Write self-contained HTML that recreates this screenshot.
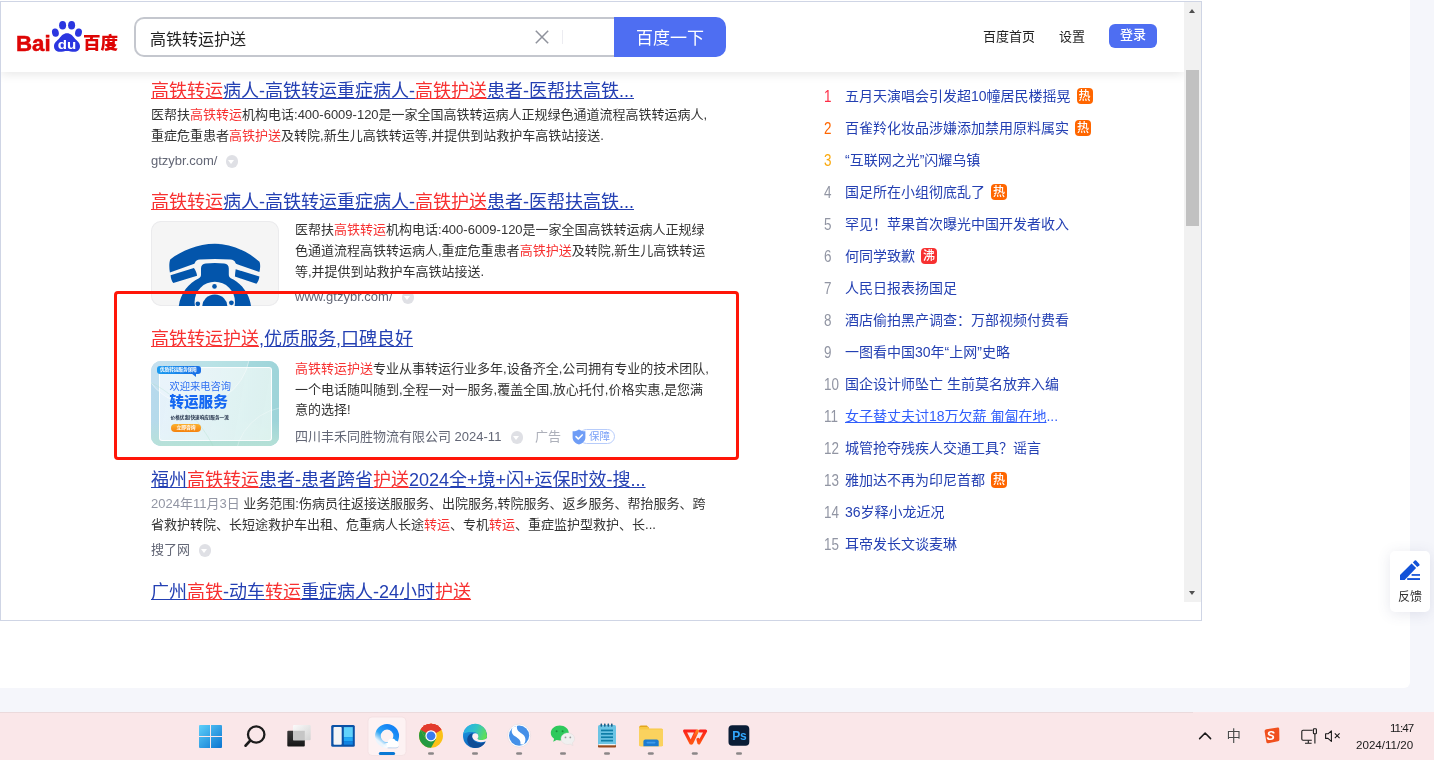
<!DOCTYPE html>
<html lang="zh-CN">
<head>
<meta charset="utf-8">
<title>高铁转运护送_百度搜索</title>
<style>
*{box-sizing:border-box;margin:0;padding:0}
html,body{width:1434px;height:760px;overflow:hidden}
body{position:relative;background:#f5f6fb;font-family:"Liberation Sans","Noto Sans CJK SC",sans-serif;color:#333;font-size:13px}
a{text-decoration:none;color:inherit}
.abs{position:absolute}
#panel{position:absolute;left:0;top:0;width:1410px;height:688px;background:#fff;border-radius:0 0 6px 0}
#frame{position:absolute;left:0;top:1px;width:1202px;height:620px;border:1px solid #cfd5e5;background:#fff;overflow:hidden}
/* everything inside frame is positioned in page coords via offset wrapper */
#in{position:absolute;left:-1px;top:-2px;width:1434px;height:760px;will-change:transform}
#head{position:absolute;left:1px;top:2px;width:1183px;height:70px;background:#fff;box-shadow:0 2px 10px rgba(0,0,0,.10)}
#sbox{position:absolute;left:134px;top:17px;width:482px;height:40px;border:2px solid #c4c7ce;border-right:none;border-radius:10px 0 0 10px;background:#fff}
#sbtn{position:absolute;left:614px;top:17px;width:112px;height:40px;background:#4e6ef2;border-radius:0 10px 10px 0;color:#fff;font-size:17px;line-height:43px;text-align:center}
#q{position:absolute;left:150px;top:19px;line-height:42px;font-size:16px;color:#222}
.nav{position:absolute;top:28px;font-size:13px;color:#222;line-height:18px}
#login{position:absolute;left:1109px;top:24px;width:48px;height:24px;background:#4e6ef2;border-radius:6px;color:#fff;font-size:13px;line-height:22px;text-align:center;font-weight:500}
.t{margin-top:1px;position:absolute;left:151px;font-size:18px;line-height:24px;color:#2440b3;text-decoration:underline;white-space:nowrap}
.t em,.d em{font-style:normal;color:#f73131}
.t em{text-decoration:underline;text-decoration-color:#f73131}
.d{position:absolute;font-size:13px;line-height:21px;color:#333;white-space:nowrap}
.u{margin-top:1px;position:absolute;font-size:13px;line-height:18px;color:#626675;white-space:nowrap}
.g{color:#9195a3}
.ad{color:#adb0ba}
.ic{position:absolute;width:12.600px;height:12.600px;border-radius:50%;background:#dfe0e5;margin-left:.5px}
.ic:after{content:"";position:absolute;left:2.900px;top:4.600px;border:3.400px solid transparent;border-top:4.400px solid #fff;border-bottom:none}
.hot{position:absolute;left:822px;font-size:14px;line-height:20px;white-space:nowrap;color:#2440b3}
.hot i{font-style:normal;display:inline-block;width:21.500px;margin-left:1.500px;color:#9195a3;font-size:16px;vertical-align:-.5px;transform:scaleX(.84);transform-origin:0 50%}
.tag{display:inline-block;width:16px;height:16px;border-radius:4px;background:#f60;color:#fff;font-size:12px;line-height:16px;text-align:center;margin-left:6px;vertical-align:1px;font-weight:500}
#redbox{position:absolute;left:113.600px;top:291.400px;width:625px;height:169px;border:3px solid #ff1608;border-radius:4px}
#task{position:absolute;left:0;top:712px;width:1434px;height:48px;background:#fae7e9}

.hov .tx{color:#315efb;text-decoration:underline}
.tag.fei{background:#f73131}
#sb{position:absolute;left:1184px;top:2px;width:17px;height:600px;background:#f1f1f1}
#sb .th{position:absolute;left:2px;top:68px;width:13px;height:156px;background:#c1c1c1}
#sb .up{position:absolute;left:5px;top:7px;border:3.800px solid transparent;border-bottom:4.300px solid #505050;border-top:none;width:0;height:0}
#sb .dn{position:absolute;left:5px;top:589px;border:3.800px solid transparent;border-top:4.300px solid #505050;border-bottom:none;width:0;height:0}
#logo{position:absolute;left:10px;top:14px}
#fb{position:absolute;left:1390px;top:550.800px;width:40px;height:61.300px;background:#fff;border-radius:5px;box-shadow:0 2px 14px rgba(70,80,120,.13)}
#fb span{position:absolute;left:0;width:40px;top:37.800px;text-align:center;font-size:12px;line-height:16px;color:#333}
.tk{position:absolute;top:712px}
#fb,#tsvg{will-change:transform}
#clock,#clock2{will-change:transform;position:absolute;font-size:11.600px;line-height:14px;color:#1b1b1b;white-space:nowrap}#clock{right:20.500px;top:721px;letter-spacing:-1px}#clock2{right:20.500px;top:737.500px}
</style>
</head>
<body>
<div id="panel"></div>
<div id="frame"><div id="in">
  <!-- results -->
  <div class="t" style="top:78px"><em>高铁转运</em>病人-高铁转运重症病人-<em>高铁护送</em>患者-医帮扶高铁...</div>
  <div class="d" style="left:151px;top:104px">医帮扶<em>高铁转运</em>机构电话:400-6009-120是一家全国高铁转运病人正规绿色通道流程高铁转运病人,<br>重症危重患者<em>高铁护送</em>及转院,新生儿高铁转运等,并提供到站救护车高铁站接送.</div>
  <div class="u" style="left:151px;top:151px">gtzybr.com/</div>
  <div class="ic" style="left:225px;top:155px"></div>

  <div class="t" style="top:189px"><em>高铁转运</em>病人-高铁转运重症病人-<em>高铁护送</em>患者-医帮扶高铁...</div>
  <div class="abs" id="img1" style="left:151px;top:221px;width:128px;height:85px;border-radius:10px;background:#f5f5f5;box-shadow:inset 0 0 0 1px #ebebed;overflow:hidden"><svg width="128" height="85" viewBox="0 0 128 85"><g fill="#0355ab">
<path d="M19.200 38.500C30 30 47 22.800 63.800 22.800S97 30.500 108.500 40.800c1.200 3 .6 7.600-.1 10.200L85.600 43c-.6-.2-1-.7-1.200-1.300-.8-2-2.400-2.900-5-3.100-10.200-.9-20.800-.9-30.400 0-2.800.3-4.400 1.300-5.200 3.300-.2.600-.6 1-1.200 1.200L18.900 51.400c-.8-4-.9-9.600.3-12.900z"/>
<path d="M19.600 54.200l23.300-7.300c1.700 2.200 2.900 5 3.200 7.900L22.300 61.900c-1.600-1.800-2.500-4.800-2.700-7.700z"/>
<path d="M84.700 48.200l23.700 7.300c-.3 2.900-1.300 5.600-3 7.300L83.900 55.500c.2-2.600.4-5 .8-7.300z"/>
<path d="M27.800 85C29.500 72 37.800 62 48 57.200c1.400-.7 2-2 2-3.600v-6c0-3 1.600-4.600 4.600-5 6-.7 12.400-.7 18.600 0 3 .4 4.600 2 4.600 5v6c0 1.600.7 2.900 2 3.600C90 62 98.300 72 100 85z"/>
</g>
<circle cx="63.800" cy="81" r="20.200" fill="#f5f5f5"/>
<g fill="#0355ab"><circle cx="63.800" cy="86" r="12.600"/><circle cx="63.500" cy="65.400" r="2.300"/><circle cx="46.800" cy="82.800" r="2.300"/><circle cx="80.400" cy="81.800" r="2.400"/><circle cx="51.500" cy="71.500" r="0"/></g></svg></div>
  <div class="d" style="left:295px;top:219px">医帮扶<em>高铁转运</em>机构电话:400-6009-120是一家全国高铁转运病人正规绿<br>色通道流程高铁转运病人,重症危重患者<em>高铁护送</em>及转院,新生儿高铁转运<br>等,并提供到站救护车高铁站接送.</div>
  <div class="u" style="left:295px;top:287px">www.gtzybr.com/</div>
  <div class="ic" style="left:401px;top:291px"></div>

  <div class="t" style="top:326px"><em>高铁转运护送</em>,优质服务,口碑良好</div>
  <div class="abs" id="img2" style="left:151px;top:361px;width:128px;height:84.600px;border-radius:10px;background:#b5dde6;overflow:hidden"><div class="abs" style="left:0;top:0;width:128px;height:85px;background:linear-gradient(100deg,#b9d9ee 0%,#a9dce0 45%,#9dd3d8 100%)"></div>
<div class="abs" style="left:0;top:60px;width:128px;height:25px;background:linear-gradient(180deg,rgba(184,226,214,0),rgba(184,226,214,.9))"></div>
<div class="abs" style="left:8px;top:5.500px;width:113px;height:74px;border-radius:3px;border:1px solid rgba(255,255,255,.85);background:linear-gradient(100deg,rgba(234,244,252,.92),rgba(226,244,240,.9))"></div>
<svg class="abs" style="left:0;top:0" width="128" height="85" viewBox="0 0 128 85"><circle cx="44" cy="-11" r="55" fill="rgba(255,255,255,.18)" stroke="rgba(255,255,255,.75)" stroke-width=".6"/><circle cx="139" cy="101" r="55" fill="none" stroke="rgba(255,255,255,.6)" stroke-width=".5"/><path d="M0 22C20 30 50 60 62 85" fill="none" stroke="rgba(160,220,190,.5)" stroke-width=".5"/></svg><div class="abs" style="left:5.800px;top:4.800px;width:44px;height:8.400px;border-radius:3px 3px 3px 3px;background:linear-gradient(90deg,#1a9bf0,#1a6fe6)"></div>
<div class="abs" style="left:40px;top:12px;width:0;height:0;border-left:5px solid transparent;border-top:4px solid #1a72e7"></div>
<div class="abs" style="left:9px;top:4.800px;width:40px;height:8.400px;line-height:8.400px;font-size:4.700px;font-weight:bold;color:#fff;white-space:nowrap;letter-spacing:-.1px">优质转运服务保障</div>
<div class="abs" style="left:18.400px;top:17.500px;font-size:10.300px;line-height:15px;color:#2b6ff0;font-weight:400;text-shadow:0 0 1px #fff;white-space:nowrap">欢迎来电咨询</div>
<div class="abs" style="left:18.400px;top:31px;font-size:14.600px;line-height:21px;color:#1668f2;font-weight:900;white-space:nowrap">转运服务</div>
<div class="abs" style="left:19.500px;top:52.500px;font-size:4.600px;line-height:8px;color:#1c2a44;font-weight:bold;white-space:nowrap;letter-spacing:.05px">价格优惠|快速响应|服务一流</div>
<div class="abs" style="left:20px;top:63px;width:30px;height:8px;border-radius:4px;background:linear-gradient(180deg,#fbb02e,#f5820e);color:#fff;font-size:4.800px;line-height:8px;text-align:center;font-weight:bold">立即咨询</div></div>
  <div class="d" style="left:295px;top:359px;line-height:20.700px"><em>高铁转运护送</em>专业从事转运行业多年,设备齐全,公司拥有专业的技术团队,<br>一个电话随叫随到,全程一对一服务,覆盖全国,放心托付,价格实惠,是您满<br>意的选择!</div>
  <div class="u" style="left:295px;top:427px">四川丰禾同胜物流有限公司 2024-11</div>
  <div class="ic" style="left:510px;top:431px"></div>
  <div class="u ad" style="left:535px;top:427px">广告</div>
  <div class="abs" style="left:579px;top:429px;width:36px;height:15px;border:1px solid #b7ccfb;border-radius:8px;background:#fff"></div>
  <div class="abs" style="left:589px;top:429px;font-size:10.500px;line-height:15px;color:#7ba2f8;white-space:nowrap">保障</div>
  <svg class="abs" style="left:572px;top:428.500px" width="15" height="16" viewBox="0 0 15 16"><path d="M7 .4c2 1.300 4 1.800 6.400 1.800v6.300c0 3.400-2.700 5.800-6.400 7.100C3.300 14.300.6 11.900.6 8.500V2.200C3 2.200 5 1.700 7 .4z" fill="#6f9df6"/><path d="M4 7.600l2.300 2.300 3.900-4" fill="none" stroke="#fff" stroke-width="1.500" stroke-linecap="round" stroke-linejoin="round"/></svg>

  <div class="t" style="top:467px">福州<em>高铁转运</em>患者-患者跨省<em>护送</em>2024全+境+闪+运保时效-搜...</div>
  <div class="d" style="left:151px;top:493px"><span class="g">2024年11月3日 </span>业务范围:伤病员往返接送服服务、出院服务,转院服务、返乡服务、帮抬服务、跨<br>省救护转院、长短途救护车出租、危重病人长途<em>转运</em>、专机<em>转运</em>、重症监护型救护、长...</div>
  <div class="u" style="left:151px;top:540px">搜了网</div>
  <div class="ic" style="left:198px;top:544px"></div>

  <div class="t" style="top:578.500px">广州<em>高铁</em>-动车<em>转运</em>重症病人-24小时<em>护送</em></div>

  <!-- hot list -->
  <div class="hot" style="top:86px"><i style="color:#fe2d46">1</i><span class="tx">五月天演唱会引发超10幢居民楼摇晃</span><span class="tag">热</span></div>
  <div class="hot" style="top:118px"><i style="color:#f60">2</i><span class="tx">百雀羚化妆品涉嫌添加禁用原料属实</span><span class="tag">热</span></div>
  <div class="hot" style="top:150px"><i style="color:#faa90e">3</i><span class="tx">“互联网之光”闪耀乌镇</span></div>
  <div class="hot" style="top:182px"><i>4</i><span class="tx">国足所在小组彻底乱了</span><span class="tag">热</span></div>
  <div class="hot" style="top:214px"><i>5</i><span class="tx">罕见！苹果首次曝光中国开发者收入</span></div>
  <div class="hot" style="top:246px"><i>6</i><span class="tx">何同学致歉</span><span class="tag fei">沸</span></div>
  <div class="hot" style="top:278px"><i>7</i><span class="tx">人民日报表扬国足</span></div>
  <div class="hot" style="top:310px"><i>8</i><span class="tx">酒店偷拍黑产调查：万部视频付费看</span></div>
  <div class="hot" style="top:342px"><i>9</i><span class="tx">一图看中国30年“上网”史略</span></div>
  <div class="hot" style="top:374px"><i>10</i><span class="tx">国企设计师坠亡 生前莫名放弃入编</span></div>
  <div class="hot hov" style="top:406px"><i>11</i><span class="tx">女子替丈夫讨18万欠薪 匍匐在地</span><span style="color:#315efb">...</span></div>
  <div class="hot" style="top:438px"><i>12</i><span class="tx">城管抢夺残疾人交通工具？谣言</span></div>
  <div class="hot" style="top:470px"><i>13</i><span class="tx">雅加达不再为印尼首都</span><span class="tag">热</span></div>
  <div class="hot" style="top:502px"><i>14</i><span class="tx">36岁释小龙近况</span></div>
  <div class="hot" style="top:534px"><i>15</i><span class="tx">耳帝发长文谈麦琳</span></div>

  <div id="head">
  </div>
<svg id="logo" width="120" height="46" viewBox="10 14 120 46">
    <text x="16" y="51" font-family="Liberation Sans,sans-serif" font-weight="bold" font-size="22.500" fill="#de0505" stroke="#de0505" stroke-width=".5" textLength="34.600" lengthAdjust="spacingAndGlyphs">Bai</text>
    <g fill="#2b36e0">
      <ellipse cx="62.6" cy="25.3" rx="3.5" ry="4.3"/>
      <ellipse cx="71.6" cy="25.3" rx="3.5" ry="4.3"/>
      <ellipse cx="55.4" cy="32.6" rx="3.4" ry="4.2" transform="rotate(-12 55.4 32.6)"/>
      <ellipse cx="78.5" cy="32.6" rx="3.4" ry="4.2" transform="rotate(12 78.5 32.6)"/>
      <path d="M67 33.2c-3.6 0-5.6 2.6-7.6 5-2.2 2.4-5.4 4.4-5.4 8 0 3.600 2.700 5.600 5.800 5.600 2.600 0 4.800-.8 7.200-.8s4.600.8 7.200.8c3.100 0 5.800-2 5.800-5.600 0-3.600-3.200-5.600-5.400-8-2-2.400-4-5-7.600-5z"/>
    </g>
    <text x="57.800" y="48.800" font-family="Liberation Sans,sans-serif" font-weight="bold" font-size="13" fill="#fff" textLength="18.500" lengthAdjust="spacingAndGlyphs">du</text>
    <text x="83" y="49.300" font-family="Liberation Sans,Noto Sans CJK SC,sans-serif" font-weight="900" font-size="17.6" fill="#de0505">百度</text>
  </svg>
  <div id="sbox"></div>
  <svg class="abs" style="left:534px;top:29px" width="16" height="16" viewBox="0 0 16 16"><path d="M1.800 1.800l12.400 12.400M14.200 1.800L1.800 14.200" stroke="#8f929c" stroke-width="1.500" fill="none"/></svg>
  <div class="abs" style="left:562px;top:30px;width:1px;height:14px;background:#ececf1"></div>
  <div id="q">高铁转运护送</div>
  <div id="sbtn">百度一下</div>
  <div class="nav" style="left:983px">百度首页</div>
  <div class="nav" style="left:1059px">设置</div>
  <div id="login">登录</div>
  <div id="sb"><div class="up"></div><div class="th"></div><div class="dn"></div></div>
  <div id="redbox"></div>
</div></div>
<div id="fb"><svg class="abs" style="left:0;top:0" width="40" height="40" viewBox="0 0 40 40"><g fill="#1252d8"><path d="M10 23.900L21.600 12.600L26.100 17.100L14.700 29H10z"/><path d="M22.900 11.400L24.700 9.600q.7-.6 1.400 0L29.300 13q.6.700 0 1.400L27.200 16z"/><rect x="21.600" y="23.100" width="8.400" height="1.700"/><rect x="17.200" y="27.100" width="12.800" height="1.900"/></g></svg><span>反馈</span></div>
<div id="task"></div><div class="abs" style="left:0;top:712px;width:1193px;height:1px;background:#ebdadc"></div>
<svg id="tsvg" class="abs" style="left:0;top:712px" width="1434" height="48" viewBox="0 0 1434 48">
  <defs>
    <linearGradient id="gw" x1="0" y1="0" x2="1" y2="1"><stop offset="0" stop-color="#5fd0fa"/><stop offset="1" stop-color="#0a74d0"/></linearGradient>
    <linearGradient id="gq" x1=".85" y1=".2" x2=".25" y2=".95"><stop offset="0" stop-color="#1585f6"/><stop offset=".6" stop-color="#2fa6f5"/><stop offset=".85" stop-color="#9ed4f9"/><stop offset="1" stop-color="#eaf5fd"/></linearGradient><linearGradient id="gc" x1="0" y1="0" x2="1" y2="0"><stop offset="0" stop-color="#fff" stop-opacity="0"/><stop offset=".3" stop-color="#fff"/><stop offset="1" stop-color="#fff"/></linearGradient>
    <linearGradient id="ge" x1="0" y1="0" x2=".4" y2="1"><stop offset="0" stop-color="#22a2e8"/><stop offset="1" stop-color="#0b62bc"/></linearGradient>
    <linearGradient id="ge2" x1="0" y1=".3" x2="1" y2=".6"><stop offset="0" stop-color="#27aeea"/><stop offset=".5" stop-color="#33c4c4"/><stop offset="1" stop-color="#62e052"/></linearGradient>
    <linearGradient id="gd" x1="0" y1="0" x2="0" y2="1"><stop offset="0" stop-color="#3a3a3a"/><stop offset="1" stop-color="#161616"/></linearGradient>
    <linearGradient id="gl" x1="0" y1="0" x2="1" y2="1"><stop offset="0" stop-color="#fbfbfb"/><stop offset="1" stop-color="#d2d2d2"/></linearGradient>
    <linearGradient id="gwp" gradientUnits="userSpaceOnUse" x1="0" y1="17" x2="0" y2="33"><stop offset="0" stop-color="#fb1c1c"/><stop offset="1" stop-color="#ff5a12"/></linearGradient><linearGradient id="gwo" gradientUnits="userSpaceOnUse" x1="0" y1="17" x2="0" y2="33"><stop offset="0" stop-color="#ff9420"/><stop offset=".5" stop-color="#ff4a14"/><stop offset="1" stop-color="#ff5a12"/></linearGradient>
  </defs>
  <!-- windows -->
  <g fill="url(#gw)"><rect x="199" y="13" width="23" height="23" rx="1"/></g>
  <rect x="210" y="13" width="1" height="23" fill="#fae7e9"/><rect x="199" y="24" width="23" height="1" fill="#fae7e9"/>
  <!-- search -->
  <circle cx="256.200" cy="22.500" r="8.200" fill="none" stroke="#1c1c1c" stroke-width="2.300"/><path d="M250.200 28.600L245.600 33.600" stroke="#1c1c1c" stroke-width="2.800" stroke-linecap="round"/>
  <!-- task view -->
  <rect x="287.300" y="18.800" width="17.500" height="15.800" rx="1" fill="url(#gd)"/><rect x="293" y="13" width="17.700" height="15.300" rx="1" fill="url(#gl)"/><rect x="293" y="18.800" width="11.800" height="9.500" fill="#c6c6c6"/>
  <!-- widgets -->
  <rect x="331.200" y="13" width="23.600" height="21.800" rx="1.500" fill="#0a51a6"/><rect x="333.500" y="15.100" width="8.200" height="17.600" rx=".8" fill="#f4f4f6"/><rect x="343.800" y="15.100" width="9" height="10" fill="#62d2fb"/><rect x="343.800" y="25.100" width="9" height="4" fill="#22a8f6"/><rect x="343.800" y="29.100" width="9" height="3.600" fill="#1183e2"/>
  <!-- active tile -->
  <rect x="368" y="5" width="38" height="38.500" rx="4" fill="#fdf2f3" stroke="#f3dfe1" stroke-width=".8"/>
  <circle cx="387.050" cy="23.900" r="9.150" fill="none" stroke="url(#gq)" stroke-width="5.700"/>
  <path d="M382.500 35.700C382.500 32.600 385.200 30.700 387.700 30.900A4.300 4.300 0 0 1 395.700 28.700A3.600 3.600 0 0 1 396.200 35.700Z" fill="url(#gc)"/>
  <path d="M387.600 35.900h8.400a3.700 3.700 0 0 0 2.500-1.200" fill="none" stroke="#8db4dc" stroke-width=".5"/>
  <rect x="378.800" y="39.900" width="16.300" height="3" rx="1.500" fill="#0a78d4"/>
  <!-- chrome -->
  <circle cx="431" cy="23.800" r="12" fill="#fbc116"/>
  <path d="M431 23.800L420.600 17.800A12 12 0 0 1 441.400 17.800z" fill="#e33b2e"/><path d="M420.600 17.800A12 12 0 0 1 441.400 17.800L431 17.800z" fill="#e33b2e"/>
  <path d="M431 11.800A12 12 0 0 1 441.392 17.800L431 17.800z" fill="#e33b2e"/>
  <path d="M420.608 17.800A12 12 0 0 1 431 11.800L441.392 17.800L431 23.800z" fill="#e33b2e"/>
  <path d="M420.608 17.800A12 12 0 0 0 431 35.800L436.200 26.800L425.800 26.800z" fill="#249a41"/>
  <path d="M420.608 17.800L431 23.800L425.800 26.800z" fill="#249a41"/>
  <circle cx="431" cy="23.800" r="5.600" fill="#fff"/><circle cx="431" cy="23.800" r="4.400" fill="#3a7cf0"/>
  <rect x="428" y="40.2" width="6" height="2.6" rx="1.3" fill="#8b8788"/>
  <!-- edge -->
  <circle cx="475" cy="23.900" r="12" fill="url(#ge)"/>
  <path d="M463.200 21.600A12 12 0 0 1 487 23.400C487.100 26.600 484.800 28.400 481.600 28.400C479.200 28.400 477.500 27.700 477.500 26.500C477.500 25.700 478.300 25.100 478.300 23.900C478.300 21.700 476.300 20.300 474 20.300C470 19.600 466 20.500 463.200 21.600Z" fill="url(#ge2)"/>
  <path d="M472.800 20.900C468.800 21.600 466.600 25.400 467.400 29.300C468.200 33 471 35.700 475 35.900C479.600 36.100 484 33.600 485.400 29.700C482.300 31.700 478.400 31.700 475.700 30C472.700 28.100 471.400 24.300 472.800 20.900Z" fill="#0e4c96"/>
  <circle cx="475.300" cy="24.200" r="3" fill="#fbeff1"/>
  <path d="M472.600 25.600C473.800 29.300 479.200 31.300 485.400 29.500L487.500 26C484 28.600 478.300 28.900 477.200 26.200Z" fill="#fbeff1"/>
  <path d="M488 25.600L484.400 28.200L485.700 29.500L488.500 31Z" fill="#fae7e9"/>
  <rect x="472" y="40.200" width="6" height="2.600" rx="1.300" fill="#8b8788"/>
  <!-- sogou browser -->
  <circle cx="519.100" cy="23.600" r="11.500" fill="#fff" stroke="#e6d9db" stroke-width=".7"/><circle cx="519.100" cy="23.600" r="10.100" fill="#4590e8"/>
  <path d="M512.600 15.400C510.900 19 511.700 22 515 24.200C518.600 26.500 521 28 520.400 32.200L523.600 32.800C526 29.500 526.200 25.600 523.200 22.800C520 20 516.200 19 517 13.800Z" fill="#fff"/>
  <rect x="516.100" y="40.200" width="6" height="2.600" rx="1.300" fill="#8b8788"/>
  <!-- wechat -->
  <path d="M559.800 13.600c-5 0-9 3.300-9 7.400 0 2.300 1.300 4.400 3.300 5.700l-.9 3 3.400-1.800c1 .3 2.100.5 3.200.5 5 0 9-3.300 9-7.400s-4-7.400-9-7.400z" fill="#2ec95c"/>
  <circle cx="556.600" cy="19.200" r="1" fill="#1a8f3c"/><circle cx="562.600" cy="19.200" r="1" fill="#1a8f3c"/>
  <path d="M567.800 20.900c-3.800 0-6.800 2.600-6.800 5.800s3 5.800 6.800 5.800c.8 0 1.600-.1 2.400-.4l2.700 1.400-.7-2.400c1.500-1.100 2.400-2.700 2.400-4.400 0-3.200-3-5.800-6.800-5.800z" fill="#f0f0f0" stroke="#dcd6d7" stroke-width=".4"/>
  <circle cx="565.500" cy="25.400" r=".9" fill="#9a9a9a"/><circle cx="570.300" cy="25.400" r=".9" fill="#9a9a9a"/>
  <rect x="560" y="40.2" width="6" height="2.6" rx="1.3" fill="#8b8788"/>
  <!-- notepad -->
  <rect x="598" y="13" width="18" height="20" rx="1.500" fill="#6cc4e4"/><rect x="598" y="32.800" width="18" height="2.800" rx=".8" fill="#9a4a1c"/><rect x="598.600" y="32" width="16.800" height="1.300" fill="#e9f4f8"/>
  <g fill="#0d7ea8"><rect x="601" y="17.600" width="12" height="1.700"/><rect x="601" y="21" width="12" height="1.700"/><rect x="601" y="24.400" width="12" height="1.700"/><rect x="601" y="27.800" width="12" height="1.700"/></g>
  <g fill="#1d5e86"><rect x="600.500" y="11.500" width="1.600" height="3.200" rx=".6"/><rect x="604" y="11.500" width="1.600" height="3.200" rx=".6"/><rect x="607.500" y="11.500" width="1.600" height="3.200" rx=".6"/><rect x="611" y="11.500" width="1.600" height="3.200" rx=".6"/></g>
  <rect x="604" y="40.2" width="6" height="2.6" rx="1.3" fill="#8b8788"/>
  <!-- folder -->
  <path d="M639.200 15.200q0-1.600 1.600-1.600h6l2.400 2.400h-10z" fill="#e2a51c"/><path d="M639.200 15h8.500l1.800 1.600h12q1.500 0 1.500 1.500v14.600q0 1.500-1.500 1.500h-20.800q-1.500 0-1.500-1.500z" fill="#f8c843"/><path d="M639.200 17.500h23.800v15.200q0 1.500-1.500 1.500h-20.800q-1.500 0-1.500-1.500z" fill="#fad25e"/>
  <path d="M643.400 34.200v-4.600q0-2 2-2h11.300q2 0 2 2v4.600z" fill="#1a7bd2"/><rect x="646.500" y="29.800" width="9" height="1.600" rx=".8" fill="#3f9bea"/>
  <rect x="647.8" y="40.2" width="6" height="2.6" rx="1.3" fill="#8b8788"/>
  <!-- wps -->
  <g fill="none" stroke-width="3.100" stroke-linejoin="round" stroke-linecap="round"><path d="M684.600 19H696.400L690.800 31Z" stroke="url(#gwp)"/><path d="M700 19H705.600L698.900 31L697.900 27.400" stroke="url(#gwp)"/><path d="M697.400 19L691.800 30.800" stroke="url(#gwo)"/></g>
  <rect x="691.800" y="40.200" width="6" height="2.600" rx="1.300" fill="#8b8788"/>
  <!-- ps -->
  <rect x="728.500" y="13.300" width="20.800" height="20.400" rx="3.800" fill="#0a1d36"/>
  <text x="732.200" y="28.200" font-family="Liberation Sans,sans-serif" font-weight="bold" font-size="12" fill="#31a8ff" letter-spacing="-.3">Ps</text>
  <rect x="736" y="40.2" width="6" height="2.6" rx="1.3" fill="#8b8788"/>
  <!-- tray -->
  <path d="M1199.600 26.600l5.500-5.600 5.500 5.600" fill="none" stroke="#1a1a1a" stroke-width="1.500" stroke-linecap="round" stroke-linejoin="round"/>
  <text x="1226.600" y="29.400" font-family="Liberation Sans,Noto Sans CJK SC,sans-serif" font-size="14.500" fill="#4a4a4a" stroke="#fff" stroke-width=".35" paint-order="stroke">中</text>
  <path d="M1266.400 17.200l11.300-1.600q1.400-.2 1.500 1.200l.2 10.800q0 1.400-1.400 1.700l-9.800 2q-1.400.3-1.800-1.100l-1.800-10.800q-.3-1.800 1.800-2.200z" fill="#f0501e"/>
  <text x="1266.600" y="28.200" font-family="Liberation Sans,sans-serif" font-weight="bold" font-style="italic" font-size="12.500" fill="#fff">S</text>
  <g fill="none" stroke="#1a1a1a" stroke-width="1.100"><path d="M1312.600 18.200h-9.600q-1.200 0-1.200 1.200v7.600q0 1.200 1.200 1.200h8.800"/><path d="M1305 31.200h6.600M1308.300 28.400v2.800"/><rect x="1313.400" y="16.800" width="3" height="5" rx=".8"/><path d="M1314.900 21.800v9.600"/></g>
  <g fill="none" stroke="#1a1a1a" stroke-width="1.100" stroke-linejoin="round"><path d="M1325.600 21.800h2.400l3.400-3v10.600l-3.400-3h-2.400z"/><path d="M1334.800 21.400l4.800 4.800M1339.600 21.400l-4.800 4.800"/></g>
</svg>
<div id="clock">11:47</div><div id="clock2">2024/11/20</div>
</body>
</html>
